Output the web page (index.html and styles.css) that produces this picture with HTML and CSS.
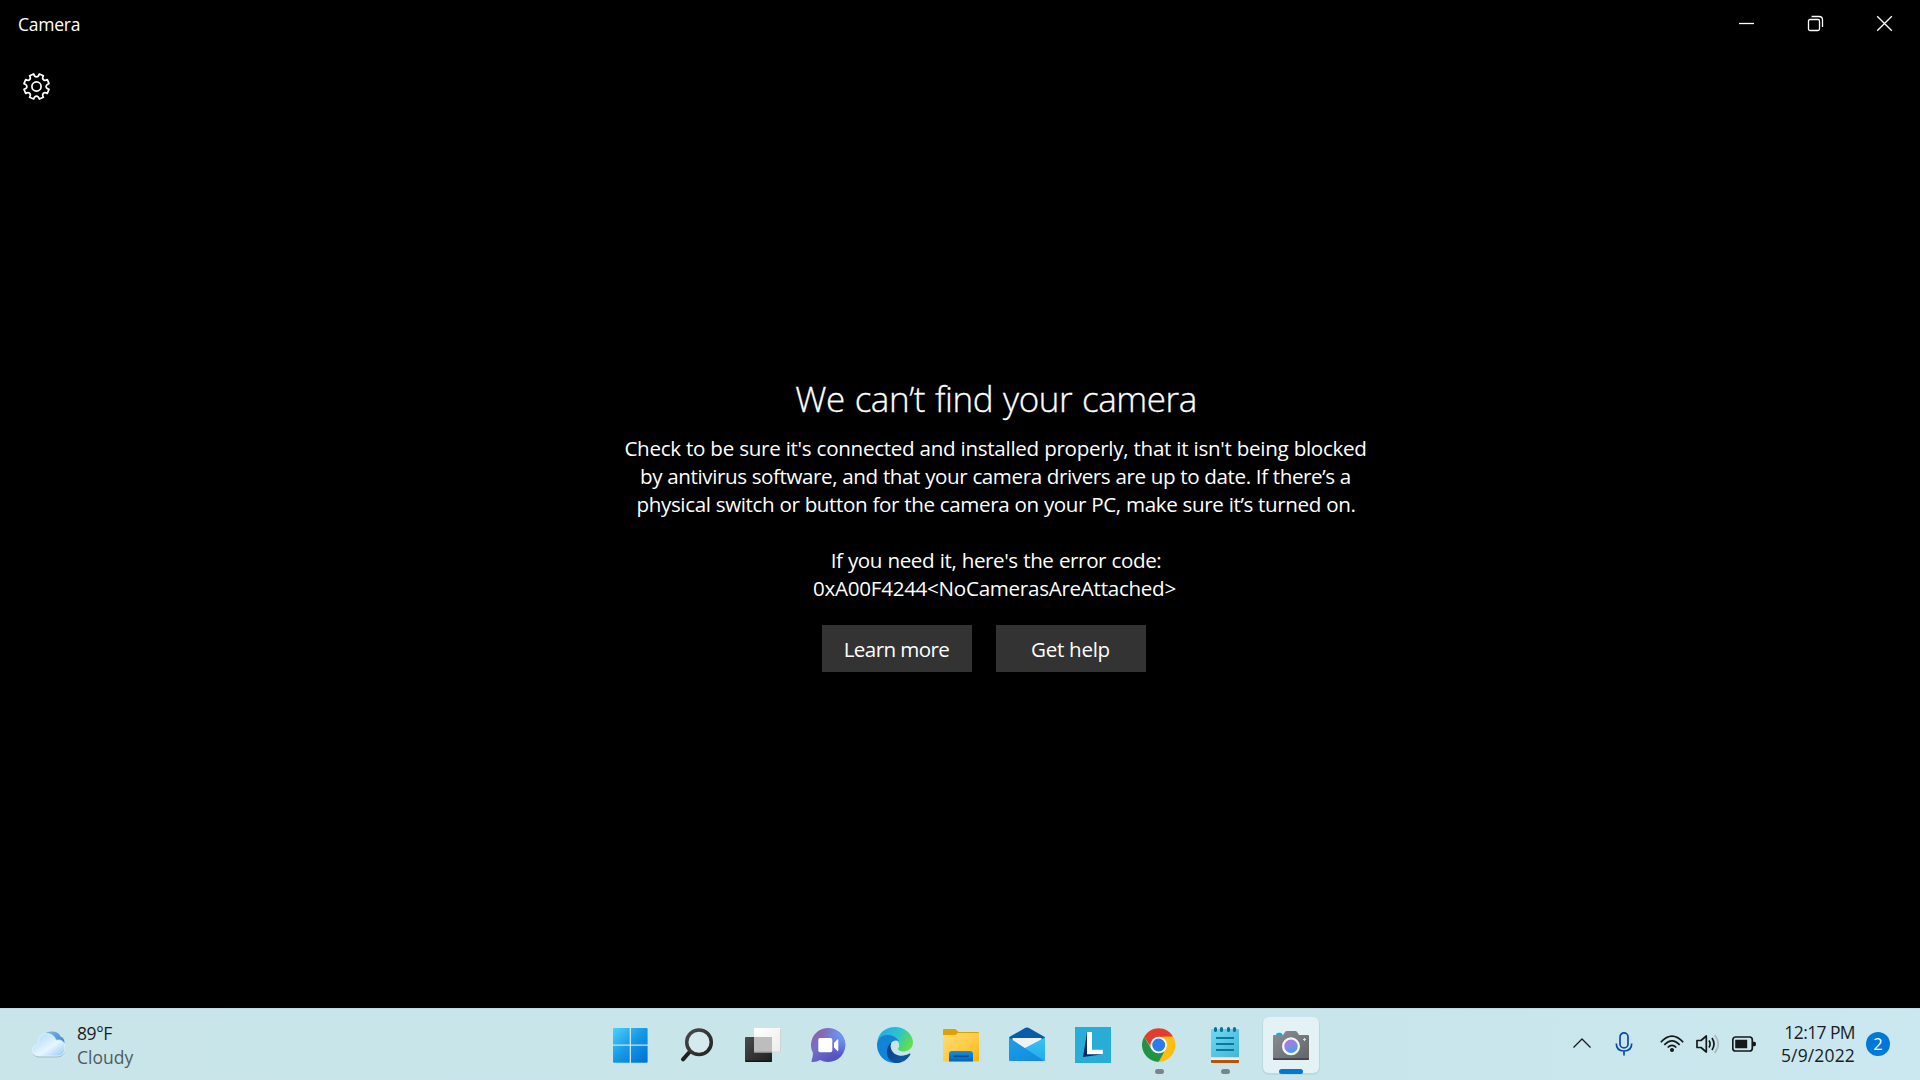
FILE: index.html
```
<!DOCTYPE html>
<html lang="en">
<head>
<meta charset="utf-8">
<title>Camera</title>
<link rel="stylesheet" href="styles.css">
</head>
<body>
<div class="desktop">
  <header class="titlebar">
    <span class="app-name">Camera</span>
    <div class="window-controls">
      <button class="control" aria-label="Minimize"><svg width="17" height="17" viewBox="0 0 17 17"><path d="M1 8.5h15"/></svg></button>
      <button class="control" aria-label="Restore"><svg width="17" height="17" viewBox="0 0 17 17"><rect x="1.5" y="4.5" width="11" height="11" rx="1.5"/><path d="M4.5 1.5h7.5q3.5 0 3.5 3.5v7"/></svg></button>
      <button class="control" aria-label="Close"><svg width="17" height="17" viewBox="0 0 17 17"><path d="M1.2 1.2l14.6 14.6M15.8 1.2L1.2 15.8"/></svg></button>
    </div>
  </header>

  <div class="toolbar">
    <button class="settings" aria-label="Settings">
      <svg width="29" height="29" viewBox="-14.5 -14.5 29 29">
        <path d="M-2.8-12.5Q-2-9.6 0-9.6T2.8-12.5L6.9-10.8Q5.4-8.2 6.8-6.8T10.8-6.9L12.5-2.8Q9.6-2 9.6 0T12.5 2.8L10.8 6.9Q8.2 5.4 6.8 6.8T6.9 10.8L2.8 12.5Q2 9.6 0 9.6T-2.8 12.5L-6.9 10.8Q-5.4 8.2-6.8 6.8T-10.8 6.9L-12.5 2.8Q-9.6 2-9.6 0T-12.5-2.8L-10.8-6.9Q-8.2-5.4-6.8-6.8T-6.9-10.8Z"/>
        <circle r="4.6"/>
      </svg>
    </button>
  </div>

  <main class="message">
    <h1 class="title">We can’t find your camera</h1>
    <p class="text">
      <span class="line line-1">Check to be sure it's connected and installed properly, that it isn't being blocked</span>
      <span class="line line-2">by antivirus software, and that your camera drivers are up to date. If there’s a</span>
      <span class="line line-3">physical switch or button for the camera on your PC, make sure it’s turned on.</span>
    </p>
    <p class="text error">
      <span class="line line-4">If you need it, here's the error code:</span>
      <span class="line line-5">0xA00F4244&lt;NoCamerasAreAttached&gt;</span>
    </p>
    <div class="actions">
      <button class="action learn">Learn more</button>
      <button class="action help">Get help</button>
    </div>
  </main>

  <footer class="taskbar">
    <div class="weather">
      <svg class="cloud" width="36" height="30" viewBox="0 0 36 30">
        <defs>
          <linearGradient id="cloud" x1="0" y1="0" x2="1" y2="1"><stop offset="0" stop-color="#b4dcf8"/><stop offset=".3" stop-color="#c5e6fb"/><stop offset=".58" stop-color="#e8f6ff"/><stop offset="1" stop-color="#8dc9f4"/></linearGradient>
          <linearGradient id="cloudBack" x1="0" y1="0" x2="1" y2="1"><stop offset="0" stop-color="#7fb9e8"/><stop offset="1" stop-color="#3e82c8"/></linearGradient>
        </defs>
        <path d="M13 5q3-4 9-3.400q6 .5 7.500 5q4 1.200 4 6.500q-4 3-12-2z" fill="url(#cloudBack)"/>
        <path d="M7.500 27.500Q1.500 26.500 1.500 21.500T7 15.500Q7 5 16 4.500Q22.500 4.500 25 11.200Q34 9.500 34 19Q34 27.500 26 27.500Z" fill="#8aa9b4" opacity=".65"/>
        <path d="M7.500 26Q1.300 25.500 1.300 20.500T7 14.500Q7 4 16 3.500Q22.500 3.500 25 10.200Q33.800 8.500 33.800 18Q33.800 26 26 26Z" fill="url(#cloud)" stroke="#e3f3fc" stroke-width=".8"/>
      </svg>
      <div class="forecast">
        <span class="temperature">89°F</span>
        <span class="condition">Cloudy</span>
      </div>
    </div>

    <nav class="apps">
      <div class="app">
        <svg viewBox="0 0 56 56">
          <defs><linearGradient id="win" gradientUnits="userSpaceOnUse" x1="10" y1="11" x2="44" y2="45"><stop offset="0" stop-color="#4fd0fd"/><stop offset=".5" stop-color="#1598e6"/><stop offset="1" stop-color="#0072d2"/></linearGradient></defs>
          <path d="M11 11h15.700v16.500H10V12q0-1 1-1zM28 11h15.600q1 0 1 1v15.500H28zM10 28.800h16.700v17H11q-1 0-1-1zM28 28.800h16.600v16q0 1-1 1H28z" fill="url(#win)"/>
        </svg>
      </div>
      <div class="app">
        <svg viewBox="0 0 56 56">
          <defs><linearGradient id="lens" x1="0" y1="0" x2="1" y2="1"><stop offset="0" stop-color="#4a4a4a"/><stop offset="1" stop-color="#222"/></linearGradient></defs>
          <path d="M21 34.500l-7 7.800" fill="none" stroke="#1f1f1f" stroke-width="4" stroke-linecap="round"/>
          <circle cx="30" cy="25.300" r="12.300" fill="#d8edf1" fill-opacity=".7" stroke="url(#lens)" stroke-width="3.500"/>
        </svg>
      </div>
      <div class="app">
        <svg viewBox="0 0 56 56">
          <defs>
            <linearGradient id="back" x1="0" y1="0" x2="1" y2="1"><stop offset="0" stop-color="#4b4b49"/><stop offset="1" stop-color="#20201f"/></linearGradient>
            <linearGradient id="front" x1="0" y1="0" x2="1" y2="1"><stop offset="0" stop-color="#fff"/><stop offset="1" stop-color="#ececec"/></linearGradient>
          </defs>
          <rect x="19" y="11" width="27" height="24.500" rx="1" fill="url(#front)"/>
          <path d="M45.500 12v22.500q0 .6-.6.600H20" fill="none" stroke="#cdd2d3"/>
          <rect x="10" y="20" width="27" height="25" rx="1" fill="url(#back)"/>
          <path d="M10.500 44.300h26" stroke="#111" stroke-width="1.200"/>
          <path d="M19 20h18v15.500H19z" fill="#bdbdbd"/>
          <path d="M19 35h18" stroke="#9b9b9b"/>
        </svg>
      </div>
      <div class="app">
        <svg viewBox="0 0 56 56">
          <defs><linearGradient id="chat" x1=".1" y1="0" x2=".9" y2="1"><stop offset="0" stop-color="#9160a8"/><stop offset=".38" stop-color="#7670c5"/><stop offset=".7" stop-color="#5b59c4"/><stop offset="1" stop-color="#504bc0"/></linearGradient><radialGradient id="chatGlow" cx="1" cy=".2" r=".65"><stop offset="0" stop-color="#6da2ff"/><stop offset="1" stop-color="#6da2ff" stop-opacity="0"/></radialGradient></defs>
          <path d="M27.300 11a17 17 0 1 1-8 32q-4 2.300-8.200 2q-1-.2-.6-1.100q1.400-3.600 1.500-7.900A17 17 0 0 1 27.300 11z" fill="url(#chat)"/>
          <path d="M27.300 11a17 17 0 1 1-8 32q-4 2.300-8.200 2q-1-.2-.6-1.100q1.400-3.600 1.500-7.900A17 17 0 0 1 27.300 11z" fill="url(#chatGlow)"/>
          <rect x="17.300" y="21" width="14" height="14.300" rx="1.800" fill="#fff"/>
          <path d="M33 26l3.300-3.400q1-.8 1 .5v10.200q0 1.300-1 .5L33 30.500z" fill="#fff"/>
        </svg>
      </div>
      <div class="app">
        <svg viewBox="0 0 56 56">
          <defs>
            <linearGradient id="edgeTop" x1="0" y1=".3" x2="1" y2=".7"><stop offset="0" stop-color="#26a9e6"/><stop offset=".5" stop-color="#2bc3d2"/><stop offset=".8" stop-color="#50d86b"/><stop offset="1" stop-color="#6ae04c"/></linearGradient>
            <linearGradient id="edgeLeft" x1="0" y1="0" x2=".7" y2="1"><stop offset="0" stop-color="#1482d0"/><stop offset="1" stop-color="#0f86e0"/></linearGradient>
            <linearGradient id="edgeDark" x1="0" y1="0" x2="1" y2="1"><stop offset="0" stop-color="#0b3f86"/><stop offset="1" stop-color="#0f5ba7"/></linearGradient>
          </defs>
          <path d="M10.300 24C12 15.500 19 10 28 10C38 10 46 17.500 46 25.500C46 31 41.500 34.500 37 34.500C33 34.500 30.500 33 31 31.500C32.500 30 32.500 27 31.500 25.500C28 19 14 17 10.300 24z" fill="url(#edgeTop)"/>
          <path d="M10 28C10 21 15 18 20.500 18C26 18 30 20.500 32 24.500C29 22.500 25 24 23.500 27C20.500 34 25.500 43.500 33.500 45.100C20 49 10 39 10 28z" fill="url(#edgeLeft)"/>
          <path d="M24.500 25.500C22.500 29 24 35 29 37.500C34 40 39 38.500 42.500 36.500Q43.800 36.300 43.300 37.700C39.500 44 32 47.500 27 45.600C21 43.500 18.500 36 20.500 31C21.300 28.500 22.500 26.500 24.500 25.500z" fill="url(#edgeDark)"/>
        </svg>
      </div>
      <div class="app">
        <svg viewBox="0 0 56 56">
          <defs><linearGradient id="folder" x1="0" y1="0" x2="1" y2="1"><stop offset="0" stop-color="#ffdc72"/><stop offset=".55" stop-color="#ffcb45"/><stop offset="1" stop-color="#f9b208"/></linearGradient><linearGradient id="tray" x1="0" y1="0" x2="0" y2="1"><stop offset="0" stop-color="#1491df"/><stop offset="1" stop-color="#0863b4"/></linearGradient></defs>
          <path d="M10 13q0-1 1-1h10.500q1.200 0 2 .9l2 2.100H45q1 0 1 1v4H10z" fill="#dfa000"/>
          <path d="M10 18h11.500q1 0 1.700-.6l1.500-1.400H46v27.500q0 1-1 1H11q-1 0-1-1z" fill="url(#folder)"/>
          <path d="M16 44.500V37q0-3 3-3h18q3 0 3 3v7.500z" fill="url(#tray)"/>
          <path d="M21 39.300h14" stroke="#074f91" stroke-width="1.500" stroke-linecap="round"/>
        </svg>
      </div>
      <div class="app">
        <svg viewBox="0 0 56 56">
          <defs><linearGradient id="mail" x1="0" y1="0" x2=".7" y2="1"><stop offset="0" stop-color="#19a1ea"/><stop offset="1" stop-color="#168bdf"/></linearGradient><linearGradient id="mailRight" x1="0" y1="0" x2="0" y2="1"><stop offset="0" stop-color="#35c5f2"/><stop offset="1" stop-color="#27a9ed"/></linearGradient></defs>
          <path d="M10 21q0-.8.700-1.300L26.500 10.800q1.500-.8 3 0L45.300 19.700q.7.500.7 1.300L40 27H16z" fill="#085ba8"/>
          <path d="M13.500 21h29v3L28 33.500 13.500 25z" fill="#f2f1f1"/>
          <path d="M46 20.500V43q0 1-1 1L24 32z" fill="url(#mailRight)"/>
          <path d="M10 20.500L45.500 44H11q-1 0-1-1z" fill="url(#mail)"/>
        </svg>
      </div>
      <div class="app">
        <svg viewBox="0 0 56 56">
          <path d="M10 10h36v36H10z" fill="#27add8"/>
          <path d="M22 15l-4 25 20-2.700L22 34z" fill="#072a66"/>
          <path d="M22 15h5v17.800h10.800v4.500H22z" fill="#fff"/>
        </svg>
      </div>
      <div class="app running">
        <svg viewBox="-27.700 -28 56 56">
          <path d="M-14.460-8.350A16.700 16.700 0 0 1 14.460-8.350L0-7.500-7 3.500z" fill="#e33b2e"/>
          <path d="M14.460-8.350A16.700 16.700 0 0 1 0 16.700L-1 14 7.400 4 5.500-8.350z" fill="#fdbe12"/>
          <path d="M0 16.700A16.700 16.700 0 0 1-14.460-8.350L-7.200 4.200Q-4 8.500 0 8.300L5.500 7z" fill="#219345"/>
          <path d="M0-8.350h14.460L7 4z" fill="#fdbe12"/>
          <circle r="8.300" fill="#fff"/><circle r="6.500" fill="#2b7bec"/>
        </svg>
      </div>
      <div class="app running">
        <svg viewBox="0 0 56 56">
          <defs><linearGradient id="pad" x1="0" y1="0" x2="1" y2="1"><stop offset="0" stop-color="#70d8f5"/><stop offset="1" stop-color="#44b4d5"/></linearGradient></defs>
          <path d="M14 40h28v5q0 1-1 1H15q-1 0-1-1z" fill="#b5530c"/>
          <path d="M14 38h28v5H14z" fill="#f1eeec"/>
          <path d="M14 40.700h28" stroke="#cfcfd0" stroke-width=".8"/>
          <path d="M15 12h26q1 0 1 1v27H14V13q0-1 1-1z" fill="url(#pad)"/>
          <path d="M18.500 11.500v2M24.500 11.500v2M31.500 11.500v2M37.500 11.500v2" stroke="#066f94" stroke-width="3" stroke-linecap="round"/>
          <path d="M19 21h18M19 27h18M19 33h18" stroke="#08789b" stroke-width="1.900"/>
        </svg>
      </div>
      <div class="app active">
        <svg viewBox="0 0 56 56">
          <defs><linearGradient id="body" x1="0" y1="0" x2="1" y2="1"><stop offset="0" stop-color="#8b8e92"/><stop offset="1" stop-color="#606468"/></linearGradient><linearGradient id="glass" x1=".3" y1="0" x2=".7" y2="1"><stop offset="0" stop-color="#a879df"/><stop offset=".45" stop-color="#8d87e5"/><stop offset="1" stop-color="#31a7ec"/></linearGradient></defs>
          <path d="M13 18.500q0-2.800 2.500-2.800h1.500q2.500 0 2.500 2.800z" fill="#1ca6df"/>
          <path d="M11 18h9l2-3q.6-1 1.800-1h8.500q1.200 0 1.800 1l2 3H45q1 0 1 1v23q0 1-1 1H11q-1 0-1-1V19q0-1 1-1z" fill="url(#body)"/>
          <path d="M10 41.300h36v.7q0 1-1 1H11q-1 0-1-1z" fill="#404448"/>
          <circle cx="28" cy="29.300" r="9" fill="#f7f6f7"/><circle cx="28" cy="29.300" r="6.700" fill="url(#glass)"/>
          <path d="M41.500 21v3M40 22.500h3" stroke="#dedede" stroke-width="1.100"/>
        </svg>
      </div>
    </nav>

    <div class="tray">
      <svg class="chevron" width="24" height="24" viewBox="0 0 24 24"><path d="M3.500 15.500L12 7l8.500 8.500"/></svg>
      <svg class="mic" width="24" height="24" viewBox="0 0 24 24"><rect x="8" y=".9" width="8" height="15" rx="4"/><path d="M4.300 11.500q0 7.500 7.700 7.500t7.700-7.500M12 19v4.500"/></svg>
      <div class="status">
        <svg width="24" height="24" viewBox="0 0 24 24"><path d="M.8 10.300q11.200-12.400 22.400 0M4.300 12.900q7.700-8.200 15.400 0M7.700 15.500q4.300-4.400 8.600 0"/><circle class="solid" cx="12" cy="18" r="2"/></svg>
        <svg width="24" height="24" viewBox="0 0 24 24"><path d="M1 8.500h4L10.300 4v16L5 15.500H1zM13 8.500q2.200 3.500 0 7M16 6q4 6 0 12"/><path class="faint" d="M18.500 3q7.500 9 0 18"/></svg>
        <svg width="24" height="24" viewBox="0 0 24 24"><rect x=".8" y="5" width="19.500" height="14" rx="2.800"/><path class="solid" d="M3.200 7.800h12v8.400h-12zM21 9.800h1.500q1.500 0 1.500 2.200t-1.500 2.200H21z"/></svg>
      </div>
      <div class="clock">
        <span class="time">12:17 PM</span>
        <span class="date">5/9/2022</span>
      </div>
      <span class="badge">2</span>
    </div>
  </footer>
</div>
</body>
</html>
```
FILE: styles.css
```
* { box-sizing: border-box; }

body {
  margin: 0;
  background: #000;
  color: #fff;
  font-family: "Open Sans", "Noto Sans", sans-serif;
}

button {
  padding: 0;
  border: 0;
  background: none;
  color: inherit;
  font: inherit;
}

svg { display: block; flex: none; }

.desktop {
  display: flex;
  flex-direction: column;
  width: 1920px;
  height: 1080px;
  overflow: hidden;
}

/* Window frame */
.titlebar {
  display: flex;
  justify-content: space-between;
  height: 48px;
  padding: 0 1px 0 18px;
}

.app-name {
  font-size: 17.5px;
  line-height: 48px;
  letter-spacing: -0.25px;
}

.window-controls { display: flex; }

.control {
  display: grid;
  place-items: center;
  width: 69px;
  height: 47px;
}

.control svg {
  fill: none;
  stroke: #fff;
  stroke-width: 1.3;
}

.toolbar { height: 77px; padding: 24px 22px; }

.settings svg {
  fill: none;
  stroke: #fff;
  stroke-width: 1.7;
  stroke-linejoin: round;
}

/* Error message */
.message {
  flex: 1;
  display: flex;
  flex-direction: column;
  align-items: center;
  padding: 250px 0 0 72px;
}

.title {
  margin: 0 0 11px;
  font-size: 35px;
  font-weight: 300;
  line-height: 48px;
  letter-spacing: -0.45px;
  word-spacing: 1.3px;
  -webkit-text-stroke: 0.3px #fff;
}

.text {
  margin: 0;
  font-size: 20.6px;
  line-height: 28px;
  text-align: center;
}

.error { margin-top: 28px; }

.line { display: block; white-space: nowrap; }
.line-1 { padding-right: 1px; letter-spacing: -0.3px; word-spacing: 0.2px; }
.line-2 { padding-right: 1px; letter-spacing: -0.42px; word-spacing: 0.25px; }
.line-3 { letter-spacing: -0.39px; word-spacing: 0.25px; }
.line-4 { letter-spacing: -0.41px; word-spacing: 0.5px; }
.line-5 { padding-right: 3px; letter-spacing: -0.28px; }

.actions { display: flex; margin-top: 23px; }

.action {
  width: 150px;
  height: 47px;
  padding: 1px 1px 0 0;
  margin-right: 24px;
  background: #333;
  font-size: 20.6px;
  line-height: 46px;
}

.learn { letter-spacing: -0.6px; }
.help { letter-spacing: -0.3px; }

/* Taskbar */
.taskbar {
  display: flex;
  height: 72px;
  border-top: 1px solid #bfdbe1;
  background: linear-gradient(90deg, #c9e5ea, #c8e5eb 70%, #cbe8f0);
  color: #1b1d1e;
  font-size: 17.5px;
}

.weather {
  display: flex;
  align-items: center;
  gap: 10px;
  width: 603px;
  padding: 0 0 0 31px;
}

.forecast, .clock { display: flex; flex-direction: column; }
.forecast { line-height: 24px; }
.temperature { letter-spacing: -0.4px; }
.condition { color: #4f5c60; }

.apps {
  display: flex;
  gap: 10px;
  padding-top: 8px;
}

.app {
  position: relative;
  width: 56px;
  height: 56px;
  border-radius: 6px;
}

.app svg { width: 56px; height: 56px; }

.active {
  background: #e4f2f6;
  box-shadow: 0 1px 0 1px #bcd9df;
}

.running::after, .active::after {
  content: "";
  position: absolute;
  top: 52px;
  left: 24px;
  width: 9px;
  height: 5px;
  border-radius: 3px;
  background: #78868b;
}

.active::after {
  left: 16px;
  width: 24px;
  background: #0078d7;
}

.tray {
  flex: 1;
  display: flex;
  align-items: center;
  justify-content: flex-end;
  padding: 0 30px 1px 0;
}

.tray svg {
  fill: none;
  stroke: #16191a;
  stroke-width: 1.7;
  stroke-linejoin: round;
}

.tray .chevron { margin-right: 18px; stroke-width: 1.3; }
.tray .mic { margin-right: 24px; stroke: #0b4ba8; }
.tray .solid { fill: #16191a; stroke: none; }
.tray .faint { stroke: #a6bcc2; }

.status { display: flex; gap: 12px; }

.clock {
  width: 100px;
  padding-right: 1px;
  align-items: flex-end;
  line-height: 23px;
}

.time { letter-spacing: -0.6px; }
.date { letter-spacing: 0.15px; }

.badge {
  width: 24px;
  height: 24px;
  margin-left: 10px;
  border-radius: 50%;
  background: #0078d7;
  color: #fff;
  font-size: 16.5px;
  line-height: 24px;
  text-align: center;
}
```
